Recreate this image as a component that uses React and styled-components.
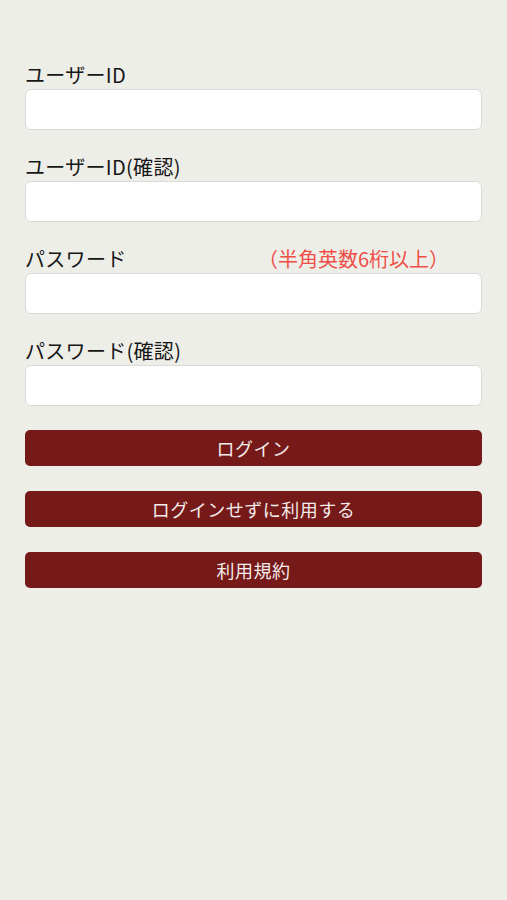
import React from "react";
import styled, { createGlobalStyle } from "styled-components";

const GlobalStyle = createGlobalStyle`
  html, body {
    margin: 0;
    padding: 0;
    background: #eeeee9;
  }
  body {
    font-family: "Noto Sans CJK JP", "Noto Sans", sans-serif;
  }
`;

const fields = [
  { label: "ユーザーID" },
  { label: "ユーザーID(確認)" },
  { label: "パスワード", note: "（半角英数6桁以上）", type: "password" },
  { label: "パスワード(確認)", type: "password" },
];

const buttons = ["ログイン", "ログインせずに利用する", "利用規約"];

export default function App() {
  return (
    <>
      <GlobalStyle />
      <Page>
        <Form>
          {fields.map((f) => (
            <Field key={f.label}>
              <LabelRow>
                <Label>{f.label}</Label>
                {f.note && <Note>{f.note}</Note>}
              </LabelRow>
              <Input type={f.type || "text"} />
            </Field>
          ))}
        </Form>
        <Buttons>
          {buttons.map((b) => (
            <Button key={b}>{b}</Button>
          ))}
        </Buttons>
      </Page>
    </>
  );
}

const Page = styled.div`
  min-height: 900px;
  padding: 63px 25px 0 25px;
  box-sizing: border-box;
  background: #eeeee9;
`;

const Form = styled.div`
  display: flex;
  flex-direction: column;
  gap: 25px;
`;

const Field = styled.div`
  display: flex;
  flex-direction: column;
  gap: 2px;
`;

const LabelRow = styled.div`
  display: flex;
  align-items: center;
  height: 24px;
`;

const Label = styled.span`
  font-size: 20px;
  line-height: 24px;
  color: #161616;
  width: 233px;
  letter-spacing: 0.3px;
`;

const Note = styled.span`
  font-size: 20px;
  line-height: 24px;
  color: #ef4f47;
`;

const Input = styled.input`
  box-sizing: border-box;
  width: 100%;
  height: 41px;
  border: 1px solid #d9d9d5;
  border-radius: 6px;
  background: #ffffff;
  outline: none;
  font-size: 16px;
  padding: 0 10px;
`;

const Buttons = styled.div`
  display: flex;
  flex-direction: column;
  gap: 25px;
  margin-top: 24px;
`;

const Button = styled.button`
  box-sizing: border-box;
  width: 100%;
  height: 36px;
  border: none;
  border-radius: 5px;
  background: #751919;
  color: #f3ecea;
  font-family: "Noto Sans CJK JP", "Noto Sans", sans-serif;
  font-size: 18px;
  letter-spacing: 0.5px;
  cursor: pointer;
`;
